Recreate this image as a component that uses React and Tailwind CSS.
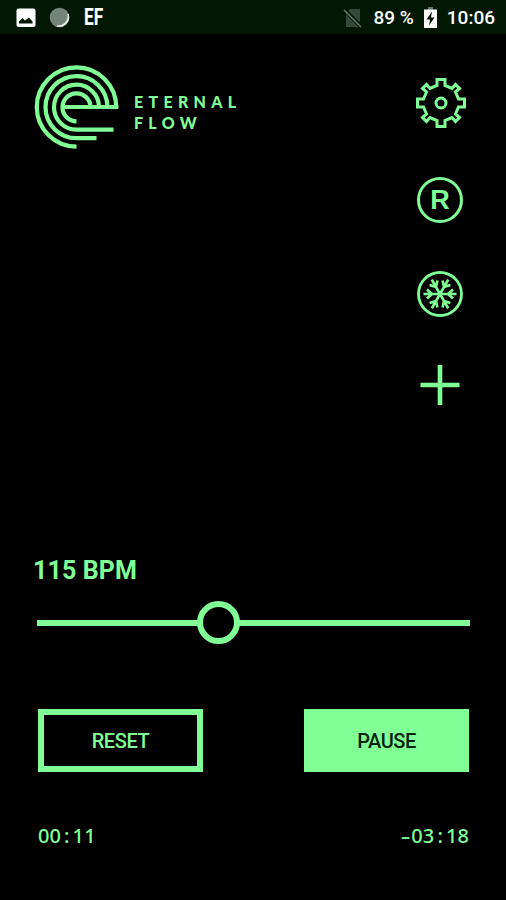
import { useState } from "react";

function StatusBar() {
  return (
    <div className="h-[34px] bg-[#021804] flex items-center justify-between pl-4 pr-[11px] pt-px text-white">
      <div className="flex items-center">
        <svg width="20" height="20" viewBox="0 0 20 20">
          <rect x="0.5" y="0.5" width="19" height="18.5" rx="2" fill="#fff" />
          <path d="M3 15.5V13.5L6.5 10L9 12.5L13 9.5L16.5 13.5V15.5Z" fill="#021804" />
        </svg>
        <svg className="ml-[13px]" width="21" height="21" viewBox="0 0 21 21">
          <circle cx="10.5" cy="10.5" r="9.8" fill="#75857a" />
          <path d="M19 7A9 9 0 0 1 8 19A10.500 10.500 0 0 0 19 7Z" fill="#e6eee8" stroke="#e6eee8" />
        </svg>
        <span className="ml-[14px] w-5 origin-left scale-x-[0.75] text-[23px] leading-none font-bold">EF</span>
      </div>
      <div className="flex items-center text-[19px] leading-none font-medium">
        <svg className="mr-2.5" width="20" height="20" viewBox="0 0 20 20">
          <path d="M7 1H17V19H3V6Z" fill="#34493a" />
          <path d="M0.500 1L18.500 19" stroke="#021804" strokeWidth="4" />
          <path d="M1 2L18 19" stroke="#6b7b6e" strokeWidth="1.500" />
        </svg>
        <span>89 %</span>
        <svg className="ml-2.5 mr-2.5" width="13" height="21" viewBox="0 0 13 21">
          <path d="M4 0H9V3H4Z" fill="#65756a" />
          <path d="M0 2.500H13V21H0Z" fill="#fff" />
          <path d="M8 4.500L2.500 12.500H6L5 18.500L10.500 10.500H7Z" fill="#021804" />
        </svg>
        <span>10:06</span>
      </div>
    </div>
  );
}

function Logo() {
  return (
    <div className="flex">
      <svg width="86" height="86" viewBox="0 0 86 86" fill="none" stroke="#80ff95" strokeWidth="4.200">
        <path d="M82.200 42A39.700 39.700 0 1 0 42.500 81.700" />
        <path d="M73.500 42A31 31 0 1 0 42.500 73.200H62.500" />
        <path d="M65 42A22.500 22.500 0 1 0 42.500 64.700H79.500" />
        <path d="M56.500 42A14 14 0 1 0 42.500 56.300" />
        <path d="M27 42H84.300" />
      </svg>
      <div className="ml-[14px] mt-[27px] font-[Lato,sans-serif] text-[16px] leading-[20.500px] font-black tracking-[5.300px]">
        <div>ETERNAL</div>
        <div>FLOW</div>
      </div>
    </div>
  );
}

function GearIcon() {
  return (
    <svg width="52" height="52" viewBox="-26 -26 52 52" fill="none" stroke="#80ff95" strokeWidth="3">
      <path d="M-4 -23.500H4V-17.500L11 -14.500L14.500 -18.500L18.500 -14.500L14.500 -11L17.500 -4H23.500V4H17.500L14.500 11L18.500 14.500L14.500 18.500L11 14.500L4 17.500V23.500H-4V17.500L-11 14.500L-14.500 18.500L-18.500 14.500L-14.500 11L-17.500 4H-23.500V-4H-17.500L-14.500 -11L-18.500 -14.500L-14.500 -18.500L-11 -14.500L-4 -17.500Z" />
      <circle r="5" />
    </svg>
  );
}

function SnowflakeIcon() {
  return (
    <svg width="46" height="46" viewBox="-23 -23 46 46" fill="none" stroke="#80ff95">
      <circle r="21.500" strokeWidth="2.800" />
      {[0, 60, 120, 180, 240, 300].map((angle) => (
        <path
          key={angle}
          d="M0 0H16.500M8 0L13 -4.500M8 0L13 4.500"
          strokeWidth="2.600"
          transform={`rotate(${angle})`}
        />
      ))}
    </svg>
  );
}

function Time({ sign, minutes, seconds }) {
  return (
    <span className="tracking-[0.100px]">
      {sign && <span className="inline-block w-[11.500px] text-center scale-x-150">{sign}</span>}
      {minutes}
      <span className="inline-block w-[11.500px] text-center">:</span>
      {seconds}
    </span>
  );
}

function App() {
  const [bpm, setBpm] = useState(115);
  const [paused, setPaused] = useState(false);

  return (
    <div className="w-[506px] h-[900px] bg-black text-[#80ff95] font-[Roboto,sans-serif] flex flex-col overflow-hidden">
      <StatusBar />

      <div className="flex justify-between pl-[34px] pr-[39px]">
        <div className="mt-[31px]">
          <Logo />
        </div>
        <div className="mt-[43px] flex flex-col items-center w-[54px]">
          <button className="ml-px">
            <GearIcon />
          </button>
          <button className="mt-12 size-[46px] rounded-full border-3 border-[#80ff95] flex items-center justify-center font-['Liberation_Sans',sans-serif] text-[27px] leading-none font-bold">
            R
          </button>
          <button className="mt-12">
            <SnowflakeIcon />
          </button>
          <button className="mt-12">
            <svg width="40" height="40" viewBox="0 0 40 40" stroke="#80ff95" strokeWidth="4.600">
              <path d="M20 0V40M0.500 20H39.500" />
            </svg>
          </button>
        </div>
      </div>

      <div className="mt-auto pl-[37px] pr-9 pb-[49px]">
        <div className="-ml-1 text-[25px] leading-8 font-bold tracking-[0.100px]">{bpm} BPM</div>
        <div className="mt-[14px] h-[43px] flex items-center" onDoubleClick={() => setBpm(115)}>
          <div className="h-[6px] w-[161px] bg-[#80ff95]" />
          <div className="size-[43px] -mx-px rounded-full border-6 border-[#80ff95]" />
          <div className="h-[6px] flex-1 bg-[#80ff95]" />
        </div>
        <div className="mt-[65px] ml-px mr-px flex justify-between text-[20px] leading-none">
          <button className="w-[165px] h-[63px] border-[6px] border-[#80ff95] font-medium tracking-[-0.400px]">
            RESET
          </button>
          <button
            className="w-[165px] h-[63px] bg-[#80ff95] text-[#06230b] font-medium tracking-[-0.500px]"
            onClick={() => setPaused(!paused)}
          >
            {paused ? "PLAY" : "PAUSE"}
          </button>
        </div>
        <div className="mt-[49px] ml-px mr-px flex justify-between font-['Noto_Sans',sans-serif] text-[20px] leading-[30px] font-medium">
          <Time minutes="00" seconds="11" />
          <Time sign="-" minutes="03" seconds="18" />
        </div>
      </div>
    </div>
  );
}

export default App;
